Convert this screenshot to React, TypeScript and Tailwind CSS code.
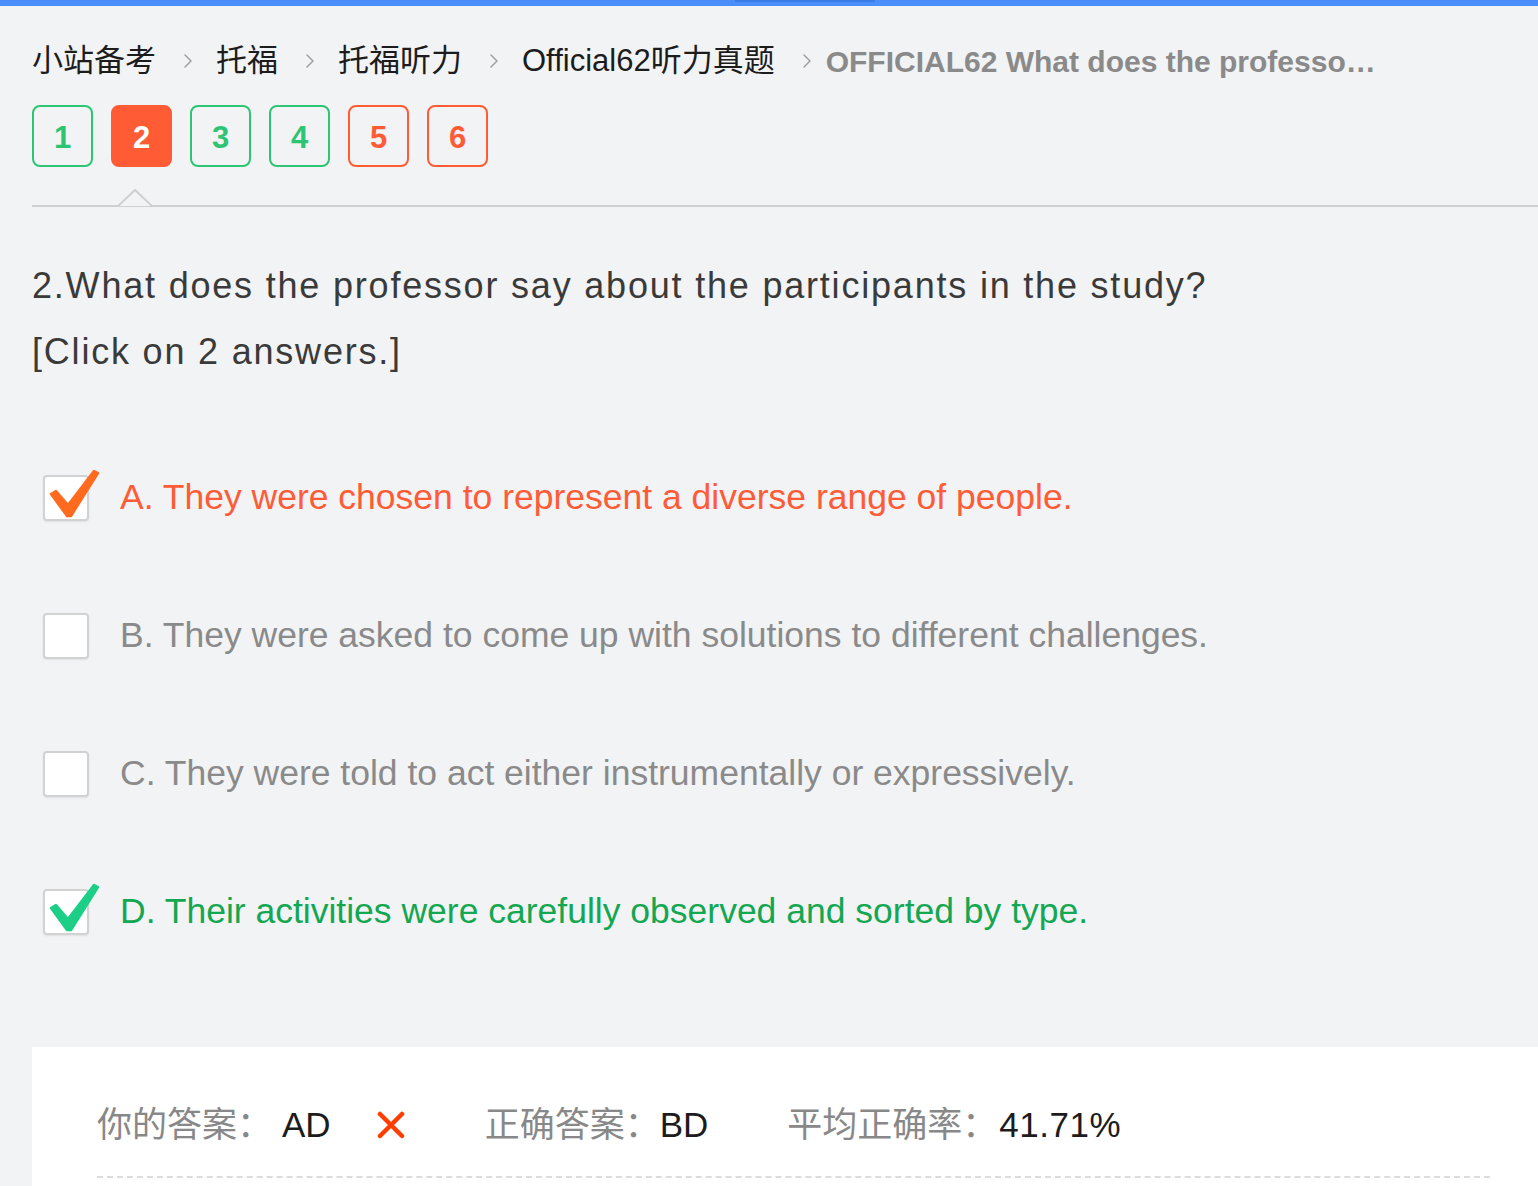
import * as React from 'react';

const font = "font-['Liberation_Sans','Noto_Sans_CJK_SC',sans-serif]";

const crumbs = ['小站备考', '托福', '托福听力', 'Official62听力真题'];

const nums = [
  { n: 1, state: 'right' },
  { n: 2, state: 'active' },
  { n: 3, state: 'right' },
  { n: 4, state: 'right' },
  { n: 5, state: 'wrong' },
  { n: 6, state: 'wrong' },
];

const options = [
  { key: 'A', text: 'They were chosen to represent a diverse range of people.', mark: 'orange' },
  { key: 'B', text: 'They were asked to come up with solutions to different challenges.', mark: '' },
  { key: 'C', text: 'They were told to act either instrumentally or expressively.', mark: '' },
  { key: 'D', text: 'Their activities were carefully observed and sorted by type.', mark: 'green' },
];

function Chevron() {
  return (
    <svg width="10" height="16" viewBox="0 0 10 16" fill="none" className="ml-[27px] mr-[23px]">
      <path d="M2 2l6 6-6 6" stroke="#9a9a9a" strokeWidth="1.4" strokeLinecap="round" strokeLinejoin="round" />
    </svg>
  );
}

function Check({ color }: { color: string }) {
  return (
    <svg width="60" height="50" viewBox="0 0 60 50" className="absolute -left-[2px] -top-[2px] overflow-visible">
      <path d="M10 21 L15 18 L27 32 L53 -2 L57 0 L30 43 L26 43 Z" fill={color} stroke={color} strokeWidth="2.5" strokeLinejoin="round" />
    </svg>
  );
}

function Checkbox({ mark }: { mark: string }) {
  return (
    <div className="relative w-[46px] h-[46px] shrink-0">
      <div className="w-full h-full bg-white border-2 border-[#d2d2d2] rounded-[4px] shadow-[0_1px_2px_rgba(0,0,0,0.08)]"></div>
      {mark === 'orange' && <Check color="#ff6a1f" />}
      {mark === 'green' && <Check color="#1ccf86" />}
    </div>
  );
}

export default function App() {
  return (
    <div className={`min-h-[1186px] bg-[#f2f3f5] ${font} overflow-hidden`}>
      <div className="h-[6px] bg-[#4b8ef9] flex">
        <div className="ml-[735px] w-[140px] h-[2px] bg-[#3a7be6]"></div>
      </div>

      <div className="pl-[32px]">
        {/* breadcrumb */}
        <div className="flex items-center h-[40px] mt-[35px] text-[31px] text-[#1c1c1c] whitespace-nowrap">
          {crumbs.map((c) => (
            <React.Fragment key={c}>
              <span>{c}</span>
              <Chevron />
            </React.Fragment>
          ))}
          <span className="text-[#8a8a8a] text-[30px] font-bold -ml-[9px]">OFFICIAL62 What does the professo…</span>
        </div>

        {/* question numbers */}
        <div className="flex gap-[18px] mt-[24px]">
          {nums.map((x) => (
            <div
              key={x.n}
              className={`w-[61px] h-[62px] pt-[4px] rounded-[8px] flex items-center justify-center text-[31px] font-bold border-2 ${
                x.state === 'active'
                  ? 'bg-[#ff5c35] border-[#ff5c35] text-white'
                  : x.state === 'wrong'
                  ? 'border-[#ff5c35] text-[#ff5c35]'
                  : 'border-[#2dc574] text-[#2dc574]'
              }`}
            >
              {x.n}
            </div>
          ))}
        </div>

        {/* divider with notch */}
        <div className="relative mt-[38px] h-[2px] bg-[#cfcfcf]">
          <svg width="34" height="18" viewBox="0 0 34 18" className="absolute left-[86px] -top-[16px]">
            <path d="M0 17 L17 1 L34 17" fill="#f2f3f5" stroke="#cfcfcf" strokeWidth="2" />
          </svg>
        </div>

        {/* question */}
        <div className="mt-[46px] text-[36px] tracking-[1.8px] leading-[66px] text-[#3a3a3a]">
          <p>2.What does the professor say about the participants in the study?</p>
          <p>[Click on 2 answers.]</p>
        </div>

        {/* options */}
        <div className="mt-[44px]">
          {options.map((o) => (
            <div key={o.key} className="h-[138px] flex items-center pl-[11px]">
              <Checkbox mark={o.mark} />
              <span
                className={`ml-[31px] text-[35.5px] ${
                  o.mark === 'orange' ? 'text-[#ff5b36]' : o.mark === 'green' ? 'text-[#14a751]' : 'text-[#8a8a8a]'
                }`}
              >
                {o.key}. {o.text}
              </span>
            </div>
          ))}
        </div>

        {/* result panel */}
        <div className="mt-[66px] bg-white pl-[65px] pr-[48px] pt-[56px] h-[200px]">
          <div className="flex items-center h-[44px] text-[35px] whitespace-nowrap">
            <span className="text-[#888]">你的答案：</span>
            <span className="text-[#1c1c1c] ml-[10px]">AD</span>
            <svg width="28" height="28" viewBox="0 0 28 28" className="ml-[46px]">
              <path d="M3 3 L25 25 M25 3 L3 25" stroke="#ff3d00" strokeWidth="4.5" strokeLinecap="round" />
            </svg>
            <span className="text-[#888] ml-[80px]">正确答案：</span>
            <span className="text-[#1c1c1c]">BD</span>
            <span className="text-[#888] ml-[79px]">平均正确率：</span>
            <span className="text-[#1c1c1c] ml-[2px] tracking-[0.5px]">41.71%</span>
          </div>
          <div className="mt-[29px] border-t-2 border-dashed border-[#dcdcdc]"></div>
        </div>
      </div>
    </div>
  );
}
